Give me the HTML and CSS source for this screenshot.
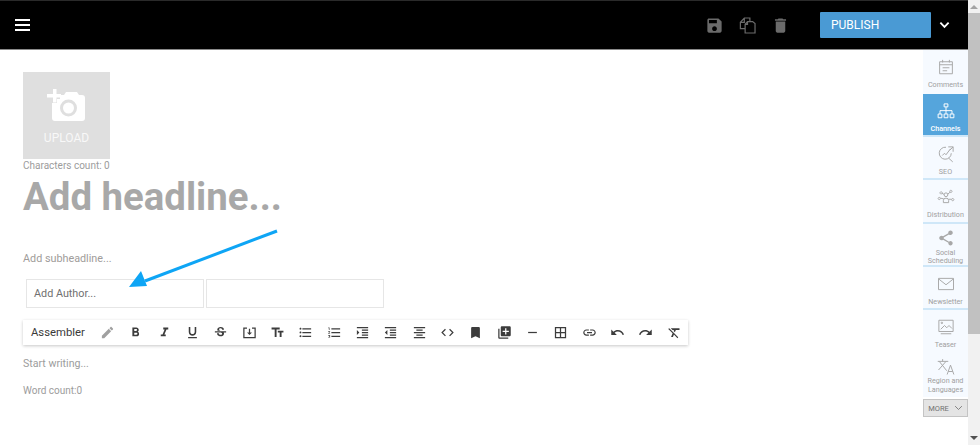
FILE: index.html
```html
<!DOCTYPE html>
<html>
	<head>
		<meta charset="utf-8">
		<title>Editor</title>
		<link rel="stylesheet" href="styles.css">
	</head>
	<body>
		<div class="page">
			<header class="topbar">
				<div class="menu"><span></span><span></span><span></span></div>
				<div class="actions">
					<svg class="action" viewBox="0 0 24 24"><path d="M17 3H5c-1.110 0-2 .9-2 2v14c0 1.100.89 2 2 2h14c1.100 0 2-.9 2-2V7l-4-4zm-5 16c-1.660 0-3-1.340-3-3s1.340-3 3-3 3 1.340 3 3-1.340 3-3 3zm3-10H5V5h10v4z"/></svg>
					<svg class="action" viewBox="0 0 24 24"><path class="line" d="M9 16H3V8L8 2.500h7V7M9 16v5.500h12.500V9.500L18.500 7H12l-3 3.500zM3 8h5V2.500M9 10.500h3V7"/></svg>
					<svg class="action" viewBox="0 0 24 24"><path d="M6 19c0 1.100.9 2 2 2h8c1.100 0 2-.9 2-2V7H6v12zM19 4h-3.500l-1-1h-5l-1 1H5v2h14V4z"/></svg>
				</div>
				<button class="publish">PUBLISH</button>
				<svg class="caret" viewBox="0 0 12 8"><path d="M1.500 1.500 6 6l4.500-4.500"/></svg>
			</header>
			<div class="workspace">
				<main class="editor">
					<div class="upload">
						<svg viewBox="0 0 40 36"><path d="M13 6h4l2-3h11l2 3h3a3 3 0 0 1 3 3v20a3 3 0 0 1-3 3H8a3 3 0 0 1-3-3V14h5v-4h3z"/><circle cx="21.500" cy="19" r="7" fill="none" stroke="#dfdfdf" stroke-width="3"/><path class="plus" d="M6 0h3.500v5H14v3.500H9.500v5H6v-5H0V5h6z"/></svg>
						<span>UPLOAD</span>
					</div>
					<div class="count">Characters count: 0</div>
					<h1 class="headline">Add headline...</h1>
					<div class="subheadline">Add subheadline...</div>
					<div class="authors">
						<div class="author">Add Author...</div>
						<div class="author"></div>
					</div>
					<div class="toolbar">
						<span class="assembler">Assembler</span>
						<svg class="tool pencil" viewBox="0 0 24 24"><path d="M3 17.250V21h3.750L17.810 9.940l-3.750-3.750L3 17.250zM20.710 7.040c.39-.39.39-1.020 0-1.410l-2.340-2.340c-.39-.39-1.020-.39-1.410 0l-1.830 1.830 3.750 3.750 1.830-1.830z"/></svg>
						<svg class="tool" viewBox="0 0 24 24"><path d="M15.600 10.790c.97-.67 1.650-1.770 1.650-2.790 0-2.260-1.750-4-4-4H7v14h7.040c2.090 0 3.710-1.700 3.710-3.790 0-1.520-.86-2.820-2.150-3.420zM10 6.500h3c.83 0 1.500.67 1.500 1.500s-.67 1.500-1.500 1.500h-3v-3zm3.500 9H10v-3h3.500c.83 0 1.500.67 1.500 1.500s-.67 1.500-1.500 1.500z"/></svg>
						<svg class="tool" viewBox="0 0 24 24"><path d="M10 4v3h2.210l-3.420 8H6v3h8v-3h-2.210l3.420-8H18V4z"/></svg>
						<svg class="tool" viewBox="0 0 24 24"><path d="M12 17c3.310 0 6-2.690 6-6V3h-2.500v8c0 1.930-1.570 3.500-3.500 3.500S8.500 12.930 8.500 11V3H6v8c0 3.310 2.690 6 6 6zm-7 2v2h14v-2H5z"/></svg>
						<svg class="tool" viewBox="0 0 24 24"><path d="M6.850 7.080C6.850 4.370 9.450 3 12.240 3c1.640 0 3 .49 3.900 1.280.77.65 1.460 1.730 1.460 3.240h-3.010c0-.31-.05-.59-.15-.85-.29-.86-1.200-1.280-2.250-1.280-1.860 0-2.340 1.020-2.340 1.700 0 .48.25.88.74 1.210.38.25.77.48 1.410.7H7.390c-.21-.34-.54-.89-.54-1.920zM21 12v-2H3v2h9.620c1.150.45 1.960.75 1.960 1.970 0 1-.81 1.670-2.280 1.670-1.540 0-2.930-.54-2.930-2.510H6.400c0 .55.08 1.130.24 1.580.81 2.290 3.290 3.300 5.670 3.300 2.270 0 5.300-.89 5.300-4.050 0-.3-.02-1.160-.45-2.030H21z"/></svg>
						<svg class="tool" viewBox="0 0 24 24"><path d="M2 4h6v2H4v13h16V6h-4V4h6v17H2zM11 6h2v6h3l-4 4-4-4h3z"/></svg>
						<svg class="tool" viewBox="0 0 24 24"><path d="M2.500 4v3h5v12h3V7h5V4h-13zm19 5h-9v3h3v7h3v-7h3V9z"/></svg>
						<svg class="tool" viewBox="0 0 24 24"><path d="M4 10.500c-.83 0-1.500.67-1.500 1.500s.67 1.500 1.500 1.500 1.500-.67 1.500-1.500-.67-1.500-1.500-1.500zm0-6c-.83 0-1.500.67-1.500 1.500S3.170 7.500 4 7.500 5.500 6.830 5.500 6 4.830 4.500 4 4.500zm0 12c-.83 0-1.500.68-1.500 1.500s.68 1.500 1.500 1.500 1.500-.68 1.500-1.500-.67-1.500-1.500-1.500zM7 19h14v-2H7v2zm0-6h14v-2H7v2zm0-8v2h14V5H7z"/></svg>
						<svg class="tool" viewBox="0 0 24 24"><path d="M2 17h2v.5H3v1h1v.5H2v1h3v-4H2v1zm1-9h1V4H2v1h1v3zm-1 3h1.800L2 13.100v.9h3v-1H3.200L5 10.900V10H2v1zm5-6v2h14V5H7zm0 14h14v-2H7v2zm0-6h14v-2H7v2z"/></svg>
						<svg class="tool" viewBox="0 0 24 24"><path d="M3 21h18v-2H3v2zM3 8v8l4-4-4-4zm8 9h10v-2H11v2zM3 3v2h18V3H3zm8 6h10V7H11v2zm0 4h10v-2H11v2z"/></svg>
						<svg class="tool" viewBox="0 0 24 24"><path d="M11 17h10v-2H11v2zm-8-5l4 4V8l-4 4zm0 9h18v-2H3v2zM3 3v2h18V3H3zm8 6h10V7H11v2zm0 4h10v-2H11v2z"/></svg>
						<svg class="tool" viewBox="0 0 24 24"><path d="M7 15v2h10v-2H7zm-4 6h18v-2H3v2zm0-8h18v-2H3v2zm4-6v2h10V7H7zM3 3v2h18V3H3z"/></svg>
						<svg class="tool" viewBox="0 0 24 24"><path d="M9.400 16.600L4.800 12l4.600-4.600L8 6l-6 6 6 6 1.400-1.400zm5.200 0l4.600-4.600-4.600-4.600L16 6l6 6-6 6-1.400-1.400z"/></svg>
						<svg class="tool" viewBox="0 0 24 24"><path d="M17 3H7c-1.100 0-1.990.9-1.990 2L5 21l7-3 7 3V5c0-1.100-.9-2-2-2z"/></svg>
						<svg class="tool" viewBox="0 0 24 24"><path d="M4 6H2v14c0 1.100.9 2 2 2h14v-2H4V6zm16-4H8c-1.100 0-2 .9-2 2v12c0 1.100.9 2 2 2h12c1.100 0 2-.9 2-2V4c0-1.100-.9-2-2-2zm-1 9h-4v4h-2v-4H9V9h4V5h2v4h4v2z"/></svg>
						<svg class="tool" viewBox="0 0 24 24"><path d="M19 13H5v-2h14v2z"/></svg>
						<svg class="tool" viewBox="0 0 24 24"><path d="M3 3v18h18V3H3zm8 16H5v-6h6v6zm0-8H5V5h6v6zm8 8h-6v-6h6v6zm0-8h-6V5h6v6z"/></svg>
						<svg class="tool" viewBox="0 0 24 24"><path d="M3.900 12c0-1.710 1.390-3.100 3.100-3.100h4V7H7c-2.760 0-5 2.240-5 5s2.240 5 5 5h4v-1.900H7c-1.710 0-3.100-1.390-3.100-3.100zM8 13h8v-2H8v2zm9-6h-4v1.900h4c1.710 0 3.100 1.390 3.100 3.100s-1.390 3.100-3.100 3.100h-4V17h4c2.760 0 5-2.240 5-5s-2.240-5-5-5z"/></svg>
						<svg class="tool" viewBox="0 0 24 24"><path d="M12.500 8c-2.650 0-5.050.99-6.900 2.600L2 7v9h9l-3.620-3.620c1.390-1.160 3.160-1.880 5.120-1.880 3.540 0 6.550 2.310 7.600 5.500l2.370-.78C21.080 11.030 17.150 8 12.500 8z"/></svg>
						<svg class="tool" viewBox="0 0 24 24"><path d="M18.400 10.600C16.550 8.990 14.150 8 11.500 8c-4.650 0-8.580 3.030-9.960 7.220L3.900 16c1.050-3.190 4.050-5.500 7.600-5.500 1.950 0 3.730.72 5.120 1.880L13 16h9V7l-3.600 3.600z"/></svg>
						<svg class="tool" viewBox="0 0 24 24"><path d="M3.270 5L2 6.270l6.970 6.970L6.500 19h3l1.570-3.660L16.730 21 18 19.730 3.550 5.270 3.270 5zM6 5v.18L8.820 8h2.400l-.72 1.680 2.100 2.100L14.210 8H20V5H6z"/></svg>
					</div>
					<div class="body-text">Start writing...</div>
					<div class="body-text words">Word count:0</div>
					<svg class="arrow" width="300" height="70" viewBox="0 0 300 70"><path d="M277 6 145 56" fill="none" stroke="#0ea5f5" stroke-width="3"/><path d="M129 62 141 46 147 61z" fill="#0ea5f5"/></svg>
				</main>
				<aside class="sidebar">
					<div class="side-item first">
						<svg viewBox="0 0 24 24"><path d="M3.500 5h17v16h-17zM3.500 9h17M7.500 2.500V6M16.500 2.500V6M7.500 13h9M7.500 17h6"/></svg>
						<span>Comments</span>
					</div>
					<div class="side-item active">
						<svg viewBox="0 0 24 24"><path d="M9.500 2.500h5v4h-5zM1.500 16h5v5h-5zM9.500 16h5v5h-5zM17.500 16h5v5h-5zM12 6.500V16M4 16v-4.500h16V16"/></svg>
						<span>Channels</span>
					</div>
					<div class="side-item">
						<svg viewBox="0 0 24 24"><path d="M19 11a8 8 0 1 1-7-8M15.500 17.500 21 22.500M7 14l3-3 2 2 6-8M15 2.500h6.500V9M21.500 2.500 17 7"/></svg>
						<span>SEO</span>
					</div>
					<div class="side-item">
						<svg viewBox="0 0 24 24"><path d="M8.500 19.500v-3a3.500 3 0 0 1 7 0v3zM12 6.500a2.500 2.500 0 1 0 0 5 2.500 2.500 0 0 0 0-5zM5.500 5a1.500 1.500 0 1 0 .01 0zM18.500 3a1.500 1.500 0 1 0 .01 0zM3 12.500a1.500 1.500 0 1 0 .01 0zM21 14a1.500 1.500 0 1 0 .01 0zM6.500 7l3 1.500M17.500 5.500l-3.500 3M4.500 13.500l4.500 1M19.500 15l-4 0"/></svg>
						<span>Distribution</span>
					</div>
					<div class="side-item social">
						<svg viewBox="0 0 24 24"><path class="fill" d="M18 16.100c-.8 0-1.500.3-2 .8l-7.100-4.200c.1-.2.100-.5.100-.7s0-.5-.1-.7l7-4.100c.5.500 1.300.8 2.100.8 1.700 0 3-1.300 3-3s-1.300-3-3-3-3 1.300-3 3c0 .2 0 .5.100.7l-7 4.100C7.500 9.300 6.800 9 6 9c-1.700 0-3 1.300-3 3s1.300 3 3 3c.8 0 1.500-.3 2.100-.8l7.100 4.200c-.1.200-.1.400-.1.600 0 1.600 1.300 2.900 2.900 2.900s2.900-1.300 2.900-2.900-1.300-2.900-2.900-2.900z"/></svg>
						<span>Social Scheduling</span>
					</div>
					<div class="side-item">
						<svg viewBox="0 0 24 24"><path d="M2 4.500h20v15H2zM2.500 5.500 12 13l9.500-7.500"/></svg>
						<span>Newsletter</span>
					</div>
					<div class="side-item plain">
						<svg viewBox="0 0 24 24"><path d="M2.500 3h19v15h-19zM5 21h14M5 15l5-5 3 3 3-3 4 4"/><circle cx="6.500" cy="6.500" r="1"/></svg>
						<span>Teaser</span>
					</div>
					<div class="side-item region">
						<svg viewBox="0 0 24 24"><path d="M1 4.500h14M7.500 1.500v3M3 4.500 13 17M12 4.500 2 16M13.500 22 18 9.500l4.500 12.500M15 18h6"/></svg>
						<span>Region and Languages</span>
					</div>
					<button class="more">MORE<svg viewBox="0 0 12 8"><path d="M1.500 1.500 6 6l4.500-4.500"/></svg></button>
				</aside>
			</div>
		</div>
		<div class="scrollbar">
			<div class="arrow-up"></div>
			<div class="thumb"></div>
			<div class="arrow-down"></div>
		</div>
	</body>
</html>
```

FILE: styles.css
```css
* {
	box-sizing: border-box;
}

html, body {
	height: 100%;
}

body {
	margin: 0;
	display: flex;
	overflow: hidden;
	background: #fff;
	font-family: Roboto, "Liberation Sans", sans-serif;
}

.page {
	flex: 1;
	display: flex;
	flex-direction: column;
	min-width: 0;
}

.topbar {
	height: 50px;
	display: flex;
	align-items: center;
	padding-left: 15px;
	background: #000;
	border-top: 1px solid #2a2a2a;
	border-bottom: 1px solid #8a8a8a;
}

.menu {
	width: 15px;
	display: flex;
	flex-direction: column;
	gap: 3px;
}

.menu span {
	height: 2px;
	background: #fff;
}

.actions {
	margin-left: auto;
	display: flex;
	gap: 14px;
}

.action {
	width: 19px;
	height: 19px;
	fill: #6b6b6b;
}

.action .line {
	fill: none;
	stroke: #6b6b6b;
	stroke-width: 1.500;
}

.publish {
	width: 111px;
	height: 26px;
	margin-left: 30px;
	padding: 0 0 0 11px;
	border: 0;
	border-radius: 1px;
	background: #4a9ad4;
	color: #fff;
	font: 12px Roboto, sans-serif;
	text-align: left;
}

.caret {
	width: 11px;
	height: 8px;
	margin-left: 8px;
	margin-right: 18px;
	fill: none;
	stroke: #fff;
	stroke-width: 2;
}

.workspace {
	flex: 1;
	display: flex;
}

.editor {
	position: relative;
	flex: 1;
	padding: 22px 0 0 23px;
	min-width: 0;
}

.upload {
	width: 87px;
	height: 87px;
	display: flex;
	flex-direction: column;
	align-items: center;
	background: #dfdfdf;
	color: #f8f8f8;
	font-size: 12px;
}

.upload svg {
	width: 40px;
	height: 36px;
	margin: 17px 0 6px;
	fill: #fff;
}

.count {
	font-size: 10px;
	line-height: 14px;
	color: #9c9c9c;
}

.headline {
	margin: 3px 0 0;
	font-size: 38.400px;
	line-height: 42px;
	font-weight: 700;
	color: #a8a8a8;
}

.subheadline {
	margin-top: 34px;
	font-size: 10.800px;
	line-height: 14px;
	color: #a09c9a;
}

.authors {
	display: flex;
	gap: 2.500px;
	margin: 13px 0 0 3px;
}

.author {
	width: 177.500px;
	height: 29px;
	padding: 0 7px;
	border: 1px solid #e6e6e6;
	font-size: 10.800px;
	line-height: 27px;
	color: #707070;
}

.toolbar {
	width: 665px;
	height: 25px;
	margin-top: 12px;
	display: flex;
	align-items: center;
	gap: 13.350px;
	background: #fff;
	box-shadow: 0 1px 3px rgba(0, 0, 0, 0.22);
}

.assembler {
	width: 63.500px;
	padding-left: 8px;
	flex: none;
	font-size: 11.300px;
	color: #3a3a3a;
}

.tool {
	width: 15px;
	height: 15px;
	flex: none;
	fill: #3c3c3c;
}

.pencil {
	fill: #a0a0a0;
}

.body-text {
	margin-top: 12px;
	font-size: 10.600px;
	line-height: 14px;
	color: #9c9c9c;
}

.words {
	margin-top: 13px;
	font-size: 10px;
}

.arrow {
	position: absolute;
	left: 0;
	top: 175px;
}

.sidebar {
	width: 45px;
	display: flex;
	flex-direction: column;
	align-items: center;
}

.side-item {
	width: 45px;
	height: 43.200px;
	padding-top: 8px;
	display: flex;
	flex-direction: column;
	align-items: center;
	background: #f6faff;
	border-bottom: 2px solid #cfe7f8;
	color: #a0a0a0;
	font-size: 7.200px;
	line-height: 8.500px;
	text-align: center;
}

.first {
	height: 44px;
	border-bottom: 0;
}

.plain {
	border-bottom: 0;
}

.side-item svg {
	width: 18px;
	height: 18px;
	margin-bottom: 5px;
	flex: none;
	fill: none;
	stroke: #a8a8a8;
	stroke-width: 1.300;
}

.side-item .fill {
	fill: #a8a8a8;
	stroke: none;
}

.side-item.active {
	background: #55a5dc;
	color: #fff;
	font-weight: 500;
}

.side-item.active svg {
	stroke: #fff;
}

.social {
	padding-top: 5px;
}

.social svg {
	margin-bottom: 2px;
}

.region {
	height: 44px;
	padding-top: 5px;
	border-bottom: 0;
}

.region svg {
	margin-bottom: 1px;
}

.more {
	width: 45px;
	height: 18px;
	margin-top: 2px;
	padding: 0;
	display: flex;
	align-items: center;
	justify-content: center;
	gap: 5px;
	border: 1px solid #c4c4c4;
	background: #e4e4e4;
	color: #707070;
	font: 7.500px Roboto, sans-serif;
}

.more svg {
	width: 9px;
	height: 6px;
	fill: none;
	stroke: #777;
	stroke-width: 1.200;
}

.scrollbar {
	width: 12px;
	flex: none;
	display: flex;
	flex-direction: column;
	align-items: center;
	background: #f1f1f1;
}

.arrow-up {
	margin-top: 5px;
	border: 4px solid transparent;
	border-top: 0;
	border-bottom-color: #a3a3a3;
}

.thumb {
	width: 100%;
	height: 321px;
	margin-top: 4px;
	background: #c1c1c1;
}

.arrow-down {
	margin-top: auto;
	margin-bottom: 5px;
	border: 4px solid transparent;
	border-bottom: 0;
	border-top-color: #505050;
}
```
